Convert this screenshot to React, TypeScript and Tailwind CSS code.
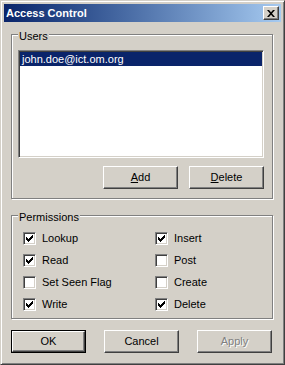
import type { ReactNode } from "react";

const raised =
  "border border-t-white border-l-white border-b-[#404040] border-r-[#404040] shadow-[inset_-1px_-1px_0_#808080]";
const sunken =
  "border border-t-[#808080] border-l-[#808080] border-b-white border-r-white shadow-[inset_1px_1px_0_#404040,inset_-1px_-1px_0_#d4d0c8]";
const etched =
  "border border-[#808080] shadow-[inset_1px_1px_0_#fff,1px_1px_0_#fff]";

const permissions = [
  ["Lookup", true],
  ["Insert", true],
  ["Read", true],
  ["Post", false],
  ["Set Seen Flag", false],
  ["Create", false],
  ["Write", true],
  ["Delete", true],
] as const;

function Button({
  children,
  isDefault,
  disabled,
}: {
  children: ReactNode;
  isDefault?: boolean;
  disabled?: boolean;
}) {
  const face = (
    <div
      className={`flex h-full w-full items-center justify-center bg-[#d4d0c8] ${raised} ${
        disabled ? "text-[#808080] [text-shadow:1px_1px_0_#fff]" : ""
      }`}
    >
      {children}
    </div>
  );
  if (isDefault) {
    return <div className="h-[23px] w-[75px] border border-black">{face}</div>;
  }
  return <div className="h-[23px] w-[75px]">{face}</div>;
}

function Checkbox({ label, checked }: { label: string; checked: boolean }) {
  return (
    <div className="flex h-[13px] items-center gap-[6px]">
      <div className={`relative h-[13px] w-[13px] bg-white ${sunken}`}>
        {checked && (
          <svg
            width="7"
            height="7"
            viewBox="0 0 7 7"
            className="absolute left-[2px] top-[2px]"
            shapeRendering="crispEdges"
          >
            <path d="M0 2 L2 4 L7 -1 L7 2 L2 7 L0 5 Z" fill="#000" />
          </svg>
        )}
      </div>
      <span className="leading-[13px]">{label}</span>
    </div>
  );
}

function GroupBox({
  title,
  className,
  children,
}: {
  title: string;
  className: string;
  children: ReactNode;
}) {
  return (
    <div className={`relative w-[262px] ${etched} ${className}`}>
      <span className="absolute -top-[5px] left-[6px] bg-[#d4d0c8] px-[1px] leading-[13px]">
        {title}
      </span>
      {children}
    </div>
  );
}

export default function App() {
  return (
    <div className="h-[365px] w-[285px] border border-t-[#d4d0c8] border-l-[#d4d0c8] border-b-[#404040] border-r-[#404040] bg-[#d4d0c8] p-[3px] font-['Liberation_Sans',Arial,sans-serif] text-[11px] text-black shadow-[inset_1px_1px_0_#fff,inset_-1px_-1px_0_#808080]">
      {/* Title bar */}
      <div className="flex h-[18px] items-center justify-between bg-linear-to-r from-[#0a246a] to-[#a6caf0] pl-[2px] pr-[2px]">
        <span className="font-bold leading-[13px] text-white">Access Control</span>
        <div className={`flex h-[14px] w-[16px] items-center justify-center bg-[#d4d0c8] ${raised}`}>
          <svg width="8" height="7" viewBox="0 0 8 7" className="-ml-[1px]">
            <path d="M0 0 L2 0 L4 2.3 L6 0 L8 0 L5 3.5 L8 7 L6 7 L4 4.7 L2 7 L0 7 L3 3.5 Z" fill="#000" />
          </svg>
        </div>
      </div>

      <div className="px-[7px]">
        <GroupBox title="Users" className="mt-[12px] h-[165px] pl-[6px] pt-[15px]">
          <div className={`h-[108px] w-[246px] bg-white p-[1px] ${sunken}`}>
            <div className="h-[14px] bg-[#0a246a] pl-[2px] leading-[14px] text-white">
              john.doe@ict.om.org
            </div>
          </div>
          <div className="mt-[8px] flex w-[246px] justify-end gap-[11px]">
            <Button>
              <span>
                <u className="underline-offset-1">A</u>dd
              </span>
            </Button>
            <Button>
              <span>
                <u className="underline-offset-1">D</u>elete
              </span>
            </Button>
          </div>
        </GroupBox>

        <GroupBox title="Permissions" className="mt-[16px] h-[104px] pl-[11px] pt-[16px]">
          <div className="grid grid-cols-[132px_1fr] gap-y-[9px]">
            {permissions.map(([label, checked]) => (
              <Checkbox key={label} label={label} checked={checked} />
            ))}
          </div>
        </GroupBox>

        <div className="mt-[11px] flex gap-[18px]">
          <Button isDefault>OK</Button>
          <Button>Cancel</Button>
          <Button disabled>Apply</Button>
        </div>
      </div>
    </div>
  );
}
